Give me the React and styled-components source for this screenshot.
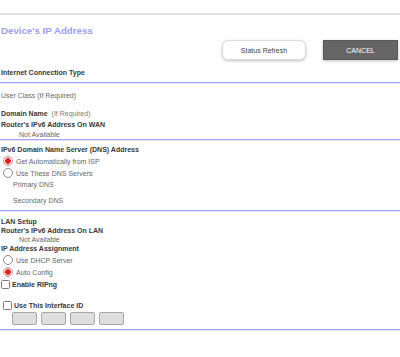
import React from "react";
import styled, { createGlobalStyle } from "styled-components";

const GlobalStyle = createGlobalStyle`
  body {
    margin: 0;
    background: #fff;
    font-family: "Liberation Sans", Arial, sans-serif;
  }
`;

const Page = styled.div`
  width: 400px;
  padding-top: 13px;
  color: #666;
  font-size: 7px;
`;

const TopRule = styled.div`
  height: 2px;
  background: #e2e2e2;
`;

const Rule = styled.div`
  height: 2px;
  margin-top: ${(p) => p.mt || 0}px;
  background: #a2a2ff;
  border-bottom: 1px solid #e4e4ff;
  box-sizing: border-box;
`;

const Title = styled.h1`
  margin: 10px 0 0 1px;
  height: 12px;
  line-height: 12px;
  font-size: 9.7px;
  font-weight: bold;
  color: #9d9df2;
`;

const ButtonBar = styled.div`
  display: flex;
  justify-content: flex-end;
  gap: 17px;
  margin-top: 3px;
  padding-right: 2px;
`;

const Button = styled.button`
  height: 20px;
  width: ${(p) => (p.dark ? 75 : 84)}px;
  padding: 0;
  font-family: inherit;
  font-size: 7px;
  border-radius: ${(p) => (p.dark ? 0 : 6)}px;
  border: 1px solid ${(p) => (p.dark ? "#5a5a5a" : "#dcdcdc")};
  background: ${(p) => (p.dark ? "#666" : "#fff")};
  color: ${(p) => (p.dark ? "#fff" : "#444")};
  box-shadow: 0 1px 3px rgba(0, 0, 0, 0.25);
`;

const Row = styled.div`
  display: flex;
  align-items: center;
  height: ${(p) => p.h || 10}px;
  margin-top: ${(p) => p.mt || 0}px;
  padding-left: ${(p) => p.indent || 1}px;
  font-weight: ${(p) => (p.bold ? "bold" : "normal")};
  color: ${(p) => (p.bold ? "#383838" : "#666")};
  white-space: pre;
`;

const Note = styled.span`
  font-weight: normal;
  color: #777;
`;

const Radio = styled.span`
  width: 8px;
  height: 8px;
  margin: 0 3px 0 2px;
  border-radius: 50%;
  border: 1px solid ${(p) => (p.on ? "#ef8a8a" : "#8a8a8a")};
  background: ${(p) =>
    p.on ? "radial-gradient(circle, #e52222 0 2.6px, #fde8e8 3px)" : "#fff"};
`;

const Check = styled.span`
  width: 7px;
  height: 7px;
  margin: 0 2px 0 ${(p) => p.ml || 0}px;
  border: 1px solid #7a7a7a;
  border-radius: 1.5px;
  background: #fff;
`;

const Fields = styled.div`
  display: flex;
  align-items: center;
  gap: 1px;
  height: 13px;
  margin-top: 1px;
  padding-left: 12px;
`;

const Field = styled.span`
  width: 23px;
  height: 11px;
  border: 1px solid #a8a8a8;
  border-radius: 2px;
  background: #dedede;
`;

const Sep = styled.span`
  width: 2px;
  font-size: 6px;
  color: #999;
  text-align: center;
`;

const RadioRow = ({ on, children, mt }) => (
  <Row h={12} mt={mt} indent={0}>
    <Radio on={on} />
    {children}
  </Row>
);

export default function App() {
  return (
    <>
      <GlobalStyle />
      <Page>
        <TopRule />
        <Title>Device's IP Address</Title>
        <ButtonBar>
          <Button>Status Refresh</Button>
          <Button dark>CANCEL</Button>
        </ButtonBar>
        <Row bold mt={7}>Internet Connection Type</Row>
        <Rule mt={5} />

        <Row mt={6}>User Class (If Required)</Row>
        <Row bold mt={8}>
          Domain Name  <Note>(If Required)</Note>
        </Row>
        <Row bold mt={1}>Router's IPv6 Address On WAN</Row>
        <Row indent={19}>Not Available</Row>
        <Rule />

        <Row bold mt={3}>IPv6 Domain Name Server (DNS) Address</Row>
        <RadioRow on mt={1}>Get Automatically from ISP</RadioRow>
        <RadioRow>Use These DNS Servers</RadioRow>
        <Row indent={13}>Primary DNS</Row>
        <Row indent={13} mt={6}>Secondary DNS</Row>
        <Rule mt={5} />

        <Row bold h={9} mt={5}>LAN Setup</Row>
        <Row bold h={9}>Router's IPv6 Address On LAN</Row>
        <Row h={9} indent={19}>Not Available</Row>
        <Row bold h={9}>IP Address Assignment</Row>
        <RadioRow mt={1}>Use DHCP Server</RadioRow>
        <RadioRow on>Auto Config</RadioRow>
        <Row bold h={12}>
          <Check ml={0} />
          Enable RIPng
        </Row>
        <Row bold h={11} mt={10} indent={3}>
          <Check />
          Use This Interface ID
        </Row>
        <Fields>
          <Field />
          <Sep>:</Sep>
          <Field />
          <Sep>:</Sep>
          <Field />
          <Sep>:</Sep>
          <Field />
        </Fields>
        <Rule mt={4} />
      </Page>
    </>
  );
}
